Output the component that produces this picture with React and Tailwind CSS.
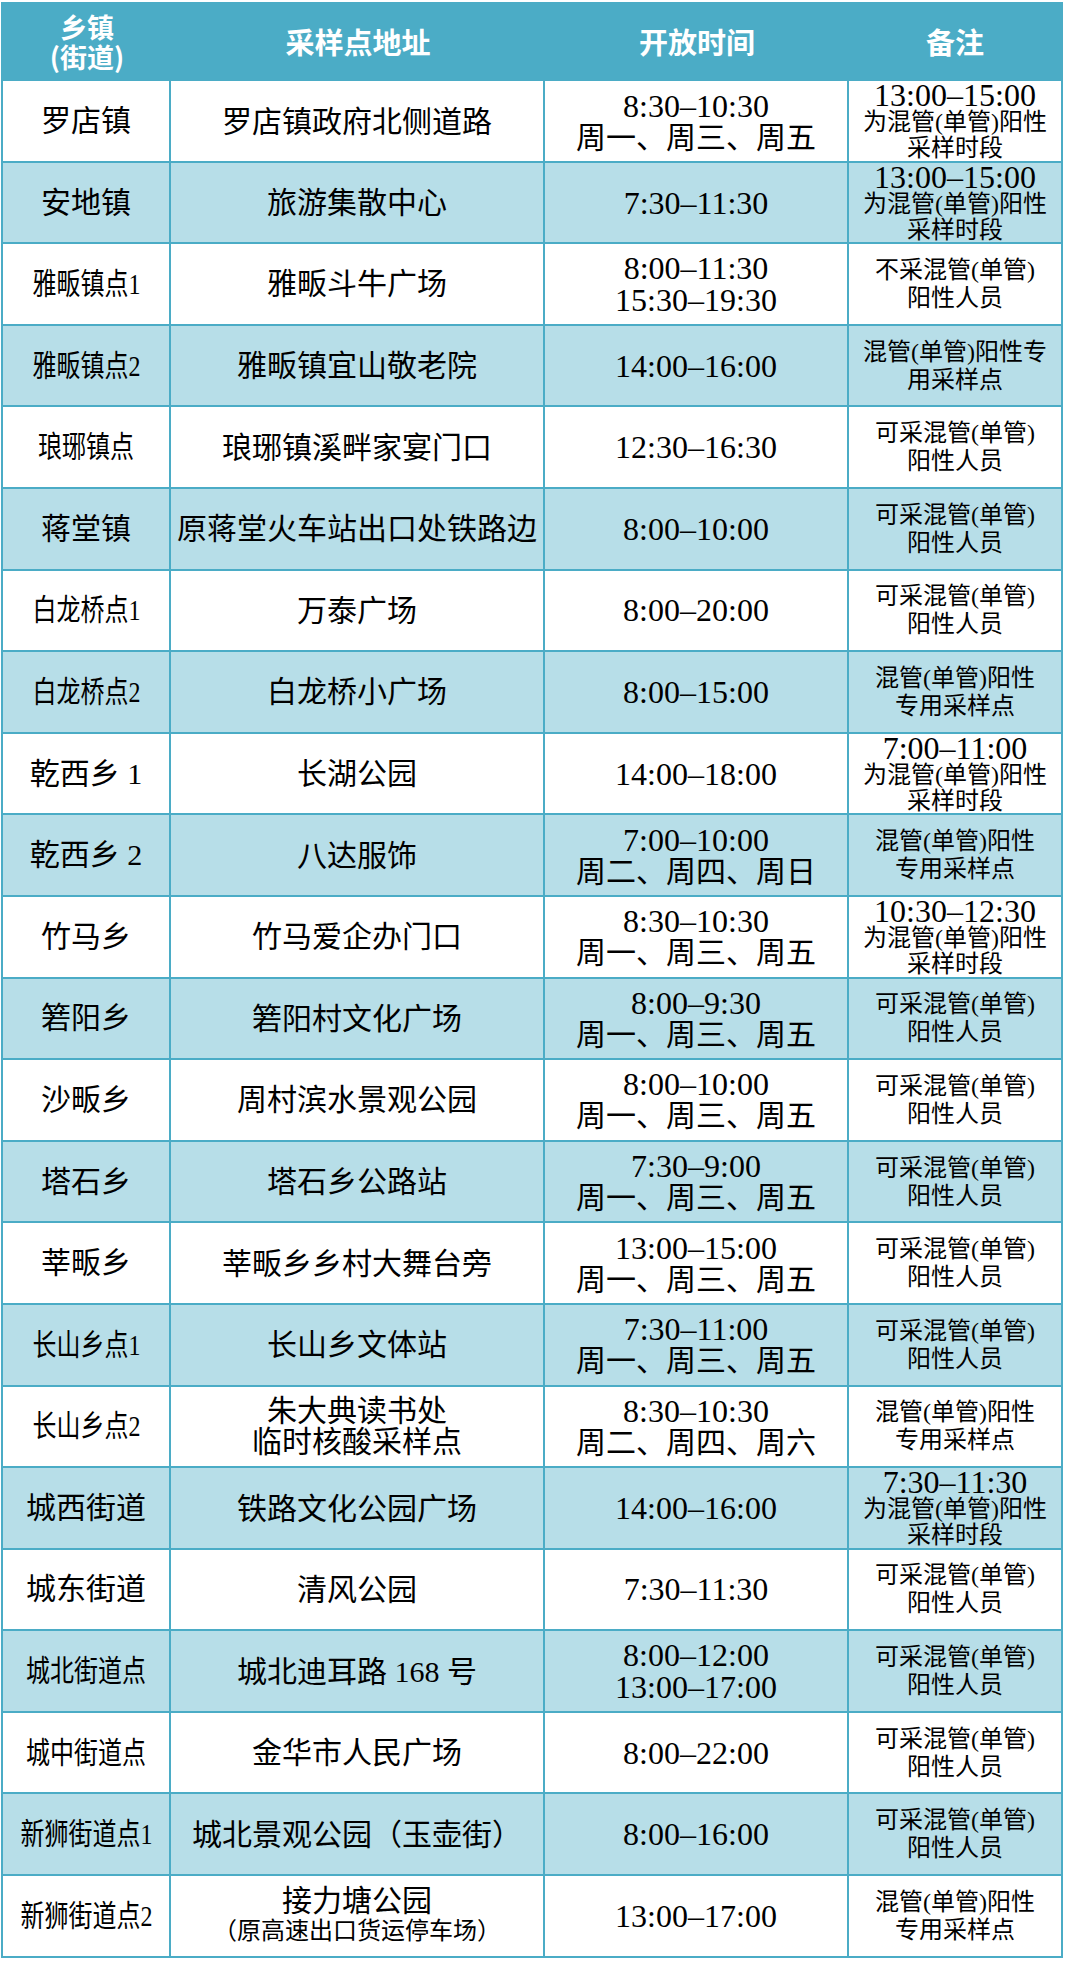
import React from "react";

const BLUE = "bg-[#b7dee8]";

const KE = ["可采混管(单管)", "阳性人员"];
const ZY = ["混管(单管)阳性", "专用采样点"];
const W135 = ["周一、周三、周五"];

// n: name, sq: squeezed name, a: address lines, small: small address line, t: time lines, note: {t: time, l: lines}
const ROWS = [
  { n: "罗店镇", a: ["罗店镇政府北侧道路"], t: ["8:30–10:30", ...W135], note: { t: "13:00–15:00", l: ["为混管(单管)阳性", "采样时段"] } },
  { n: "安地镇", a: ["旅游集散中心"], t: ["7:30–11:30"], note: { t: "13:00–15:00", l: ["为混管(单管)阳性", "采样时段"] } },
  { n: "雅畈镇点1", sq: true, a: ["雅畈斗牛广场"], t: ["8:00–11:30", "15:30–19:30"], note: { l: ["不采混管(单管)", "阳性人员"] } },
  { n: "雅畈镇点2", sq: true, a: ["雅畈镇宜山敬老院"], t: ["14:00–16:00"], note: { l: ["混管(单管)阳性专", "用采样点"] } },
  { n: "琅琊镇点", sq: true, a: ["琅琊镇溪畔家宴门口"], t: ["12:30–16:30"], note: { l: KE } },
  { n: "蒋堂镇", a: ["原蒋堂火车站出口处铁路边"], t: ["8:00–10:00"], note: { l: KE } },
  { n: "白龙桥点1", sq: true, a: ["万泰广场"], t: ["8:00–20:00"], note: { l: KE } },
  { n: "白龙桥点2", sq: true, a: ["白龙桥小广场"], t: ["8:00–15:00"], note: { l: ZY } },
  { n: "乾西乡 1", a: ["长湖公园"], t: ["14:00–18:00"], note: { t: "7:00–11:00", l: ["为混管(单管)阳性", "采样时段"] } },
  { n: "乾西乡 2", a: ["八达服饰"], t: ["7:00–10:00", "周二、周四、周日"], note: { l: ZY } },
  { n: "竹马乡", a: ["竹马爱企办门口"], t: ["8:30–10:30", ...W135], note: { t: "10:30–12:30", l: ["为混管(单管)阳性", "采样时段"] } },
  { n: "箬阳乡", a: ["箬阳村文化广场"], t: ["8:00–9:30", ...W135], note: { l: KE } },
  { n: "沙畈乡", a: ["周村滨水景观公园"], t: ["8:00–10:00", ...W135], note: { l: KE } },
  { n: "塔石乡", a: ["塔石乡公路站"], t: ["7:30–9:00", ...W135], note: { l: KE } },
  { n: "莘畈乡", a: ["莘畈乡乡村大舞台旁"], t: ["13:00–15:00", ...W135], note: { l: KE } },
  { n: "长山乡点1", sq: true, a: ["长山乡文体站"], t: ["7:30–11:00", ...W135], note: { l: KE } },
  { n: "长山乡点2", sq: true, a: ["朱大典读书处", "临时核酸采样点"], t: ["8:30–10:30", "周二、周四、周六"], note: { l: ZY } },
  { n: "城西街道", a: ["铁路文化公园广场"], t: ["14:00–16:00"], note: { t: "7:30–11:30", l: ["为混管(单管)阳性", "采样时段"] } },
  { n: "城东街道", a: ["清风公园"], t: ["7:30–11:30"], note: { l: KE } },
  { n: "城北街道点", sq: true, a: ["城北迪耳路 168 号"], t: ["8:00–12:00", "13:00–17:00"], note: { l: KE } },
  { n: "城中街道点", sq: true, a: ["金华市人民广场"], t: ["8:00–22:00"], note: { l: KE } },
  { n: "新狮街道点1", sq: true, a: ["城北景观公园（玉壶街）"], t: ["8:00–16:00"], note: { l: KE } },
  { n: "新狮街道点2", sq: true, a: ["接力塘公园"], small: "（原高速出口货运停车场）", t: ["13:00–17:00"], note: { l: ZY } },
];

const isDigits = (s) => /^[0-9:–]+$/.test(s);

function Row({ r, i }) {
  const bg = i % 2 === 1 ? BLUE : "bg-white";
  return (
    <div className={`grid grid-cols-[168px_374px_304px_1fr] h-[81.6px] border-b-2 border-[#4bacc6] ${bg}`}>
      <div className="flex items-center justify-center border-r-2 border-[#4bacc6] text-[30px] leading-[30px] whitespace-nowrap">
        <span className={r.sq ? "inline-block scale-x-[0.8]" : ""}>{r.n}</span>
      </div>
      <div className="flex flex-col items-center justify-center border-r-2 border-[#4bacc6] whitespace-nowrap">
        {r.a.map((s) => (
          <div key={s} className="text-[30px] leading-[31px]">{s}</div>
        ))}
        {r.small && <div className="text-[24px] leading-[30px]">{r.small}</div>}
      </div>
      <div className="flex flex-col items-center justify-center border-r-2 border-[#4bacc6] whitespace-nowrap">
        {r.t.map((s) => (
          <div key={s} className={isDigits(s) ? "text-[32px] leading-[32px]" : "text-[30px] leading-[31px]"}>{s}</div>
        ))}
      </div>
      <div className="flex flex-col items-center justify-center whitespace-nowrap">
        {r.note.t && <div className="text-[32px] leading-[28px]">{r.note.t}</div>}
        {r.note.l.map((s) => (
          <div key={s} className={r.note.t ? "text-[24px] leading-[26px]" : "text-[24px] leading-[28px]"}>{s}</div>
        ))}
      </div>
    </div>
  );
}

export default function App() {
  return (
    <div className="bg-white pt-[2px] pl-[1px] w-[1065px] h-[1963px]">
      <div className="w-[1062px] border-x-2 border-[#4bacc6] text-black font-['Liberation_Serif','Noto_Sans_CJK_SC',serif]">
        <div className="grid grid-cols-[168px_374px_304px_1fr] h-[79px] bg-[#4bacc6] text-white font-bold font-['Noto_Sans_CJK_SC',sans-serif]">
          <div className="flex flex-col items-center justify-center text-[27px] leading-[30px]">
            <div>乡镇</div>
            <div>(街道)</div>
          </div>
          <div className="flex items-center justify-center text-[29px]">采样点地址</div>
          <div className="flex items-center justify-center text-[29px]">开放时间</div>
          <div className="flex items-center justify-center text-[29px]">备注</div>
        </div>
        {ROWS.map((r, i) => (
          <Row key={r.n} r={r} i={i} />
        ))}
      </div>
    </div>
  );
}
